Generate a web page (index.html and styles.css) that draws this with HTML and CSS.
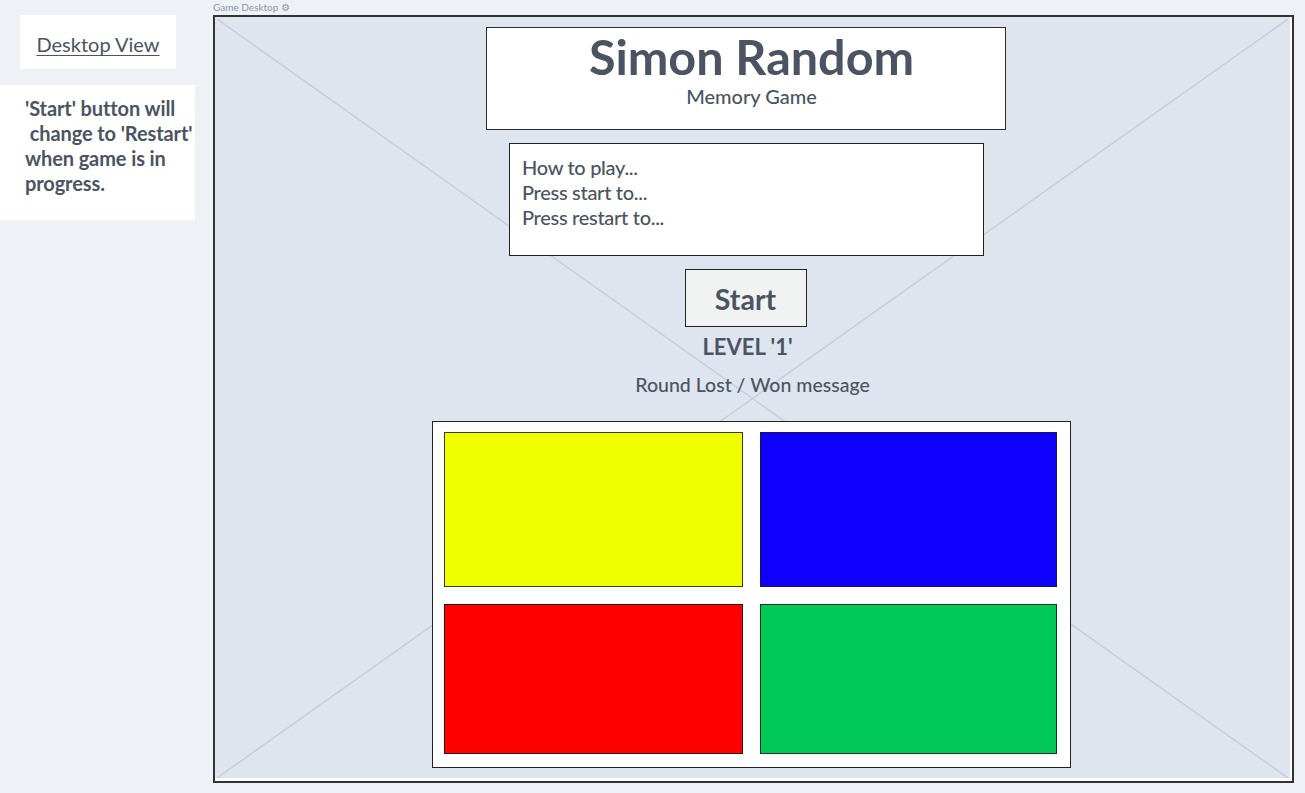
FILE: index.html
```html
<!DOCTYPE html>
<html>
<head>
<meta charset="utf-8">
<link rel="stylesheet" href="styles.css">
</head>
<body>
<div class="page">
  <aside class="side">
    <div class="view-box"><a class="view-link" href="#">Desktop View</a></div>
    <div class="note">'Start' button will<br>&nbsp;change to 'Restart'<br>when game is in<br>progress.</div>
  </aside>
  <main class="stage">
    <div class="stage-label">Game Desktop <span class="gear">&#9881;</span></div>
    <div class="frame">
      <div class="canvas">
        <svg class="cross" viewBox="0 0 100 100" preserveAspectRatio="none">
          <line x1="0" y1="0" x2="100" y2="100" vector-effect="non-scaling-stroke"/>
          <line x1="100" y1="0" x2="0" y2="100" vector-effect="non-scaling-stroke"/>
        </svg>
        <div class="content">
          <header class="title-box">
            <h1 class="title">Simon Random</h1>
            <p class="subtitle">Memory Game</p>
          </header>
          <div class="howto">How to play...<br>Press start to...<br>Press restart to...</div>
          <button class="start">Start</button>
          <div class="level">LEVEL '1'</div>
          <div class="message">Round Lost / Won message</div>
          <div class="board">
            <div class="tile yellow"></div>
            <div class="tile blue"></div>
            <div class="tile red"></div>
            <div class="tile green"></div>
          </div>
        </div>
      </div>
    </div>
  </main>
</div>
</body>
</html>
```

FILE: styles.css
```css
* { box-sizing: border-box; }
html, body {
  margin: 0;
  padding: 0;
  background: #eef1f6;
  font-family: Lato, "Open Sans", sans-serif;
  color: #4a5462;
}
.page {
  display: flex;
  width: 1305px;
  height: 793px;
  overflow: hidden;
}
.side {
  width: 213px;
  flex: none;
  padding-top: 15px;
}
.view-box {
  margin-left: 20px;
  width: 156px;
  height: 54px;
  background: #fff;
  display: flex;
  align-items: center;
  justify-content: center;
}
.view-link {
  color: #4a5462;
  font-size: 20px;
  text-decoration: underline;
  text-underline-offset: 3px;
  text-decoration-thickness: 1px;
  padding-top: 4px;
}
.note {
  margin-top: 16px;
  width: 195px;
  height: 135px;
  background: #fff;
  padding: 11px 0 0 25px;
  font-size: 20px;
  font-weight: 700;
  line-height: 25px;
  letter-spacing: -0.1px;
  white-space: nowrap;
}
.stage {
  position: relative;
  padding-top: 15px;
}
.stage-label {
  position: absolute;
  top: 1px;
  left: 0;
  font-size: 10px;
  line-height: 12px;
  color: #8a97aa;
}
.gear { font-size: 10px; }
.frame {
  width: 1081px;
  height: 768px;
  border: 2px solid #333;
  background: #fff;
  padding: 0 2px 3px 0;
}
.canvas {
  position: relative;
  height: 100%;
  background: #dfe5ee;
}
.cross {
  position: absolute;
  left: 2px;
  top: 2px;
  width: calc(100% - 4px);
  height: calc(100% - 2px);
}
.cross line {
  stroke: #c6cedb;
  stroke-width: 1.5;
}
.content {
  position: relative;
  display: flex;
  flex-direction: column;
  align-items: center;
  padding: 10px 14px 0 0;
}
.title-box {
  width: 520px;
  height: 103px;
  background: #fff;
  border: 1.5px solid #2b2b2b;
  text-align: center;
  padding-left: 12px;
}
.title {
  margin: 0;
  font-size: 48.5px;
  font-weight: 700;
  line-height: 56px;
  padding-top: 0;
}
.subtitle {
  margin: 0;
  font-size: 20px;
  line-height: 24px;
  font-weight: 500;
}
.howto {
  margin-top: 13px;
  margin-left: 2px;
  width: 475px;
  height: 113px;
  background: #fff;
  border: 1px solid #222;
  padding: 11px 0 0 12px;
  font-size: 20px;
  line-height: 25px;
  font-weight: 500;
  letter-spacing: -0.3px;
}
.start {
  margin-top: 13px;
  width: 122px;
  height: 58px;
  background: #f1f3f3;
  border: 1px solid #222;
  font-family: Lato, sans-serif;
  font-size: 28.5px;
  font-weight: 700;
  color: #4a5462;
  padding: 2px 0 0;
}
.level {
  margin-top: 6px;
  margin-left: 4px;
  font-size: 22px;
  font-weight: 700;
  line-height: 28px;
}
.message {
  margin-top: 12px;
  margin-left: 14px;
  font-size: 19.5px;
  line-height: 24px;
  font-weight: 500;
}
.board {
  margin-top: 24px;
  margin-left: 11px;
  width: 639px;
  height: 347px;
  background: #fff;
  border: 1px solid #222;
  display: grid;
  grid-template-columns: 299px 297px;
  grid-template-rows: 155px 150px;
  gap: 17px;
  padding: 10px 13px 13px 11px;
}
.tile { border: 1.5px solid #222; }
.yellow { background: #efff00; border-color: #3a3a10; }
.blue { background: #0d00ff; border-color: #1a1a40; }
.red { background: #ff0000; border-color: #3a1010; }
.green { background: #00c957; border-color: #103a20; }
```
